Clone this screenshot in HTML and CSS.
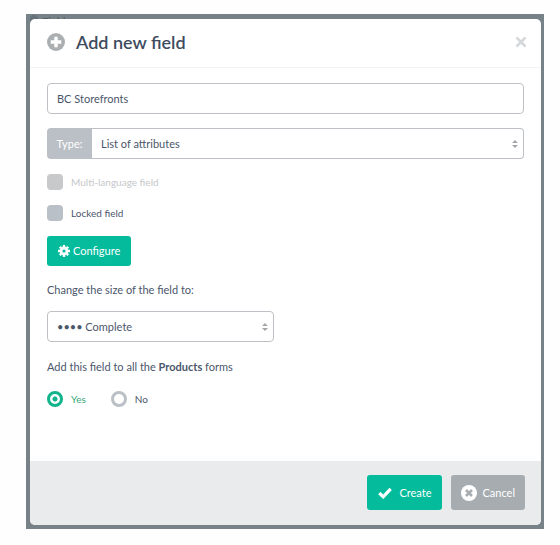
FILE: index.html
```html
<!DOCTYPE html>
<html lang="en">
<head>
<meta charset="utf-8">
<title>Add new field</title>
<link rel="stylesheet" href="styles.css">
</head>
<body>
<div class="backdrop">
  <div class="behind" aria-hidden="true"><span class="behind-dot"></span>Fields</div>
  <form class="dialog" role="dialog" aria-labelledby="title">
    <header class="header">
      <svg class="plus" viewBox="0 0 18 18" aria-hidden="true"><circle cx="9" cy="9" r="9" fill="#acafb1"/><path d="M9 3.7v10.6M3.7 9h10.6" stroke="#fff" stroke-width="3.4"/></svg>
      <h1 class="title" id="title">Add new field</h1>
      <button class="close" type="button" aria-label="Close"><svg viewBox="0 0 12 12"><path d="M1.5 1.5l9 9M10.5 1.5l-9 9" stroke="#d5d8db" stroke-width="2.6"/></svg></button>
    </header>
    <div class="body">
      <input class="control" type="text" value="BC Storefronts" aria-label="Field name">
      <div class="group">
        <label class="addon" for="type">Type:</label>
        <div class="select">
          <select class="control joined" id="type"><option>List of attributes</option></select>
          <svg class="arrows" viewBox="0 0 6 8" aria-hidden="true"><path d="M3 0l3 3H0zM3 8l3-3H0z" fill="#a3a7ab"/></svg>
        </div>
      </div>
      <label class="check disabled"><input type="checkbox" disabled>Multi-language field</label>
      <label class="check"><input type="checkbox">Locked field</label>
      <button class="button configure" type="button">
        <svg class="gear" viewBox="0 0 12 12" aria-hidden="true"><circle cx="6" cy="6" r="3" fill="none" stroke="#fff" stroke-width="2.8"/><path d="M6 0v2M6 10v2M0 6h2M10 6h2M1.8 1.8l1.4 1.4M8.8 8.8l1.4 1.4M10.2 1.8L8.8 3.2M3.2 8.8l-1.4 1.4" stroke="#fff" stroke-width="2.4"/></svg>Configure</button>
      <label class="caption" for="size">Change the size of the field to:</label>
      <div class="select half">
        <select class="control" id="size"><option>•••• Complete</option></select>
        <svg class="arrows" viewBox="0 0 6 8" aria-hidden="true"><path d="M3 0l3 3H0zM3 8l3-3H0z" fill="#a3a7ab"/></svg>
      </div>
      <fieldset class="choices">
        <legend class="legend">Add this field to all the <b>Products</b> forms</legend>
        <div class="radios">
          <label class="radio"><input type="radio" name="all" checked><span>Yes</span></label>
          <label class="radio"><input type="radio" name="all"><span>No</span></label>
        </div>
      </fieldset>
    </div>
    <footer class="footer">
      <button class="button" type="button"><svg class="tick" viewBox="0 0 14 12" aria-hidden="true"><path d="M1.3 6l3.9 3.8L12.7 1.8" fill="none" stroke="#fff" stroke-width="3.2"/></svg>Create</button>
      <button class="button cancel" type="button"><svg class="cross" viewBox="0 0 16 16" aria-hidden="true"><circle cx="8" cy="8" r="8" fill="#fff"/><path d="M5 5l6 6M11 5l-6 6" stroke="#a6acb0" stroke-width="2.6"/></svg>Cancel</button>
    </footer>
  </form>
</div>
</body>
</html>
```
FILE: styles.css
```css
* { box-sizing: border-box; }

body {
  margin: 14px 16px 16px 26px;
  background: #fefefe;
  color: #4b566b;
  font: 11px/16px Lato, "Liberation Sans", sans-serif;
}

input, select, button { font: inherit; color: inherit; }

.backdrop {
  position: relative;
  padding: 5px 3px 4px 4px;
  background: #768288;
}

.behind {
  position: absolute;
  top: 0;
  left: 4px;
  display: flex;
  align-items: center;
  gap: 4px;
  color: #515c64;
}

.behind-dot {
  width: 8px;
  height: 14px;
  border-radius: 4px;
  background: #66727a;
}

.dialog {
  position: relative;
  overflow: hidden;
  border-radius: 5px;
  background: #fff;
}

.header {
  display: flex;
  align-items: center;
  height: 49px;
  padding: 0 14px 2px 17px;
  border-bottom: 1px solid #f2f3f4;
}

.plus { width: 18px; height: 18px; }

.title {
  flex: 1;
  margin: 0 0 0 11px;
  color: #3e4c5e;
  font-size: 18px;
  line-height: 24px;
  font-weight: 600;
}

.close {
  display: flex;
  padding: 0;
  border: 0;
  background: none;
}

.close svg { width: 12px; height: 12px; }

.body {
  display: flex;
  flex-direction: column;
  align-items: flex-start;
  padding: 15px 17px 54px;
}

.control {
  appearance: none;
  width: 100%;
  height: 31px;
  padding: 0 9px;
  border: 1px solid #bdc1c5;
  border-radius: 4px;
  background: #fff;
}

.group {
  display: flex;
  width: 100%;
  margin-top: 14px;
}

.addon {
  width: 45px;
  border-radius: 4px 0 0 4px;
  background: #bac0c5;
  color: #fff;
  line-height: 31px;
  text-align: center;
}

.joined { border-left: 0; border-radius: 0 4px 4px 0; }

.select { position: relative; flex: 1; }

.half { flex: none; width: calc(50% - 12px); }

.arrows {
  position: absolute;
  top: 12px;
  right: 6px;
  width: 6px;
  height: 8px;
  pointer-events: none;
}

.check {
  display: flex;
  align-items: center;
  gap: 8px;
  margin-top: 15px;
  font-size: 10px;
}

.check input {
  appearance: none;
  width: 16px;
  height: 16px;
  margin: 0;
  border-radius: 4px;
  background: #bac0c8;
}

.disabled { color: #c5c7ca; }
.disabled input { background: #c8c9ca; }

.button {
  display: flex;
  align-items: center;
  justify-content: center;
  height: 35px;
  padding: 0 11px;
  border: 0;
  border-radius: 3px;
  background: #04bb9c;
  color: #fff;
}

.configure {
  height: 30px;
  margin-top: 15px;
  gap: 3px;
}

.gear { width: 12px; height: 12px; }

.caption { margin: 16px 0 13px; }

.legend { padding: 0; }

.choices {
  margin: 17px 0 0;
  padding: 0;
  border: 0;
}

.radios { display: flex; gap: 25px; margin-top: 16px; }

.radio {
  display: flex;
  align-items: center;
  gap: 8px;
  font-size: 10px;
}

.radio input {
  appearance: none;
  width: 16px;
  height: 16px;
  margin: 0;
  border: 3px solid #bac0c5;
  border-radius: 50%;
}

.radio input:checked {
  border-color: #12b48c;
  background: radial-gradient(circle, #12b48c 2px, #fff 3px);
}

.radio input:checked + span { color: #35a878; }

.footer {
  display: flex;
  justify-content: flex-end;
  gap: 9px;
  padding: 14px 16px 15px;
  background: #e9ebec;
}

.tick { width: 14px; height: 12px; margin-right: 7px; }

.cancel { padding: 0 10px; background: #a6acb0; }
.cross { width: 16px; height: 16px; margin-right: 5px; }
```
